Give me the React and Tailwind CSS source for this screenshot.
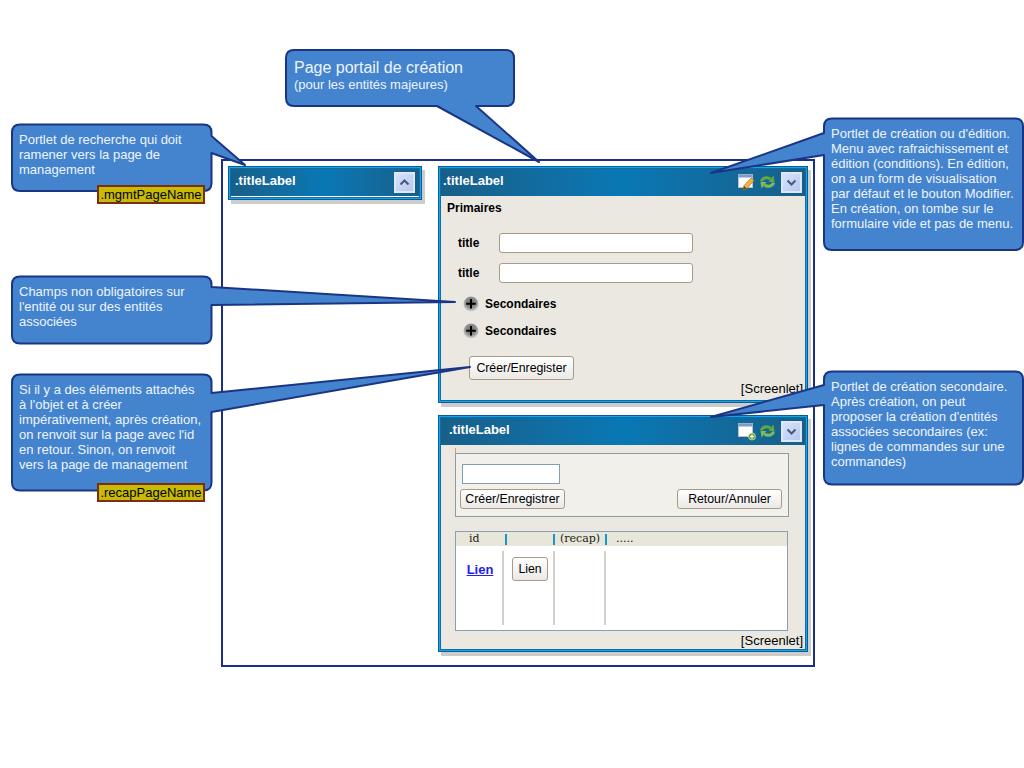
import React from 'react';

const calloutPath = ({ x, y, w, h, side, a, tip, b }) => {
  const r = 8;
  const R = x + w;
  const B = y + h;
  const top = `M${x + r} ${y}H${R - r}Q${R} ${y} ${R} ${y + r}`;
  const right = side === 'right' ? `V${a}L${tip[0]} ${tip[1]}L${R} ${b}V${B - r}` : `V${B - r}`;
  const bottom =
    side === 'bottom'
      ? `Q${R} ${B} ${R - r} ${B}H${b}L${tip[0]} ${tip[1]}L${a} ${B}H${x + r}`
      : `Q${R} ${B} ${R - r} ${B}H${x + r}`;
  const left = side === 'left' ? `V${b}L${tip[0]} ${tip[1]}L${x} ${a}V${y + r}` : `V${y + r}`;
  return `${top}${right}${bottom}Q${x} ${B} ${x} ${B - r}${left}Q${x} ${y} ${x + r} ${y}Z`;
};

const callouts = [
  { x: 286, y: 50, w: 228, h: 56, side: 'bottom', a: 437, tip: [539, 162], b: 476 },
  { x: 12, y: 124.5, w: 199.5, h: 66.5, side: 'right', a: 136, tip: [245, 165], b: 153 },
  { x: 824, y: 118.5, w: 199, h: 131.5, side: 'left', a: 133, tip: [711, 173], b: 155 },
  { x: 12, y: 276.5, w: 199.5, h: 67, side: 'right', a: 287, tip: [455, 302], b: 305 },
  { x: 12, y: 374.5, w: 199.5, h: 116, side: 'right', a: 393, tip: [470, 367], b: 412 },
  { x: 824, y: 371.5, w: 199, h: 113, side: 'left', a: 385, tip: [711, 417], b: 405 },
];

const Note = ({ className, lines }) => (
  <div className={`absolute text-[13px] leading-[15px] text-[#eef4ff] whitespace-nowrap ${className}`}>
    {lines.map((line) => (
      <div key={line}>{line}</div>
    ))}
  </div>
);

const Tag = ({ className, children }) => (
  <div className={`absolute flex items-center justify-center w-[108px] h-[19px] bg-[#c9bb05] border-2 border-[#7b2f10] text-[13px] text-black ${className}`}>
    {children}
  </div>
);

const ArrowButton = ({ up }) => (
  <div className="w-[21px] h-[21px] border-2 border-[#dfe7f5] bg-gradient-to-br from-[#d7e2fb] to-[#b6c8f0] flex items-center justify-center">
    <svg width="11" height="7" viewBox="0 0 11 7">
      <path d={up ? 'M1.5 5.5 5.5 1.5 9.5 5.5' : 'M1.5 1.5 5.5 5.5 9.5 1.5'} fill="none" stroke="#465a78" strokeWidth="2" />
    </svg>
  </div>
);

const WindowIcon = ({ children }) => (
  <svg width="16" height="18" viewBox="0 0 16 18" className="overflow-visible">
    <rect x="0.5" y="1.5" width="14" height="13" fill="#ffffff" stroke="#b4c4d6" />
    <rect x="0.5" y="1.5" width="14" height="3" fill="#7d9ccc" />
    {children}
  </svg>
);

const EditIcon = () => (
  <WindowIcon>
    <path d="M6 12.5 13 5 16 7.5 9 15.5 5 17Z" fill="#f2b23e" stroke="#b87a20" strokeWidth="0.7" />
    <path d="M5 17 6 13 9 15.5Z" fill="#6b4a20" />
  </WindowIcon>
);

const AddIcon = () => (
  <WindowIcon>
    <circle cx="14" cy="14.5" r="3.6" fill="#6ea83c" stroke="#dff0c8" strokeWidth="0.6" />
    <path d="M14 12.5V16.5M12 14.5H16" stroke="#ffffff" strokeWidth="1.2" />
  </WindowIcon>
);

const RefreshIcon = () => (
  <svg width="17" height="16" viewBox="0 0 17 16">
    <path d="M2.5 7.5C3.2 3.8 8 2.6 11.6 5" fill="none" stroke="#63a845" strokeWidth="3" />
    <path d="M9.5 8H15.5L14.5 1.5Z" fill="#63a845" />
    <path d="M14.5 8.5C13.8 12.2 9 13.4 5.4 11" fill="none" stroke="#7dbb5a" strokeWidth="3" />
    <path d="M7.5 8H1.5L2.5 14.5Z" fill="#7dbb5a" />
  </svg>
);

const PlusBall = () => (
  <svg width="16" height="16" viewBox="0 0 16 16">
    <defs>
      <radialGradient id="ball" cx="50%" cy="40%" r="60%">
        <stop offset="0%" stopColor="#6a6a6a" />
        <stop offset="60%" stopColor="#909090" />
        <stop offset="100%" stopColor="#d8d8d8" />
      </radialGradient>
    </defs>
    <circle cx="8" cy="8" r="7.5" fill="url(#ball)" />
    <path d="M8 3V12.5M3.2 7.8H12.8" stroke="#000000" strokeWidth="2" />
  </svg>
);

const Button = ({ className, children }) => (
  <div className={`flex items-center justify-center rounded-[3px] border border-[#a89a88] bg-gradient-to-b from-white to-[#ebe9e6] text-[12.3px] text-black ${className}`}>
    {children}
  </div>
);

const Portlet = ({ className, titleClass, icons, children }) => (
  <div className={`absolute border border-[#0b5c95] shadow-[3px_4px_0_#cccccc] ${className}`}>
    <div className="h-full border border-[#14a6ec]">
      <div className="flex flex-col h-full border border-[#0b6ea8]">
        <div className="flex items-center h-[27px] shrink-0 bg-gradient-to-r from-[#175f88] via-[#0878b5] to-[#175f88]">
          <div className={`grow pb-[4px] text-[13px] font-bold text-white ${titleClass}`}>.titleLabel</div>
          {icons}
        </div>
        {children}
      </div>
    </div>
  </div>
);

const PortletIcons = ({ icon }) => (
  <div className="flex items-center gap-[5px] pr-[3px]">
    <div className="flex items-center gap-[5px] mb-[2px]">
      {icon}
      <RefreshIcon />
    </div>
    <ArrowButton />
  </div>
);

const Field = () => (
  <div className="flex items-center h-[20px]">
    <div className="w-[41px] text-[12px] font-bold text-black">title</div>
    <div className="w-[194px] h-[20px] bg-white border border-[#a89a88] rounded-[3px]" />
  </div>
);

const Secondary = () => (
  <div className="flex items-center gap-[6px] h-[17px] pl-[16px]">
    <PlusBall />
    <div className="text-[12px] font-bold text-black">Secondaires</div>
  </div>
);

const Divider = () => <div className="w-[2px] bg-[#d3d0c9] my-[5px]" />;

const HeadTick = () => <div className="w-[2px] h-[11px] bg-[#1598c8]" />;

export default function App() {
  return (
    <div className="relative w-[1024px] h-[768px] bg-white overflow-hidden font-['Liberation_Sans',sans-serif]">
      <div className="absolute left-[221px] top-[159px] w-[594px] h-[508px] border-2 border-[#1b2f85]" />

      <Portlet
        className="left-[228px] top-[166px] w-[194px] h-[34px]"
        titleClass="pl-[4px]"
        icons={<div className="pr-[4px]"><ArrowButton up /></div>}
      >
        <div className="h-[1px] mx-[1px] bg-white" />
      </Portlet>

      <Portlet
        className="left-[438px] top-[166px] w-[370px] h-[237px]"
        titleClass="pl-[2px]"
        icons={<PortletIcons icon={<EditIcon />} />}
      >
        <div className="flex flex-col grow bg-[#ebe8e2] px-[6px] pt-[5px]">
          <div className="text-[12px] font-bold text-black leading-[15px]">Primaires</div>
          <div className="flex flex-col gap-[10px] pl-[11px] pt-[17px]">
            <Field />
            <Field />
          </div>
          <div className="flex flex-col gap-[10px] pt-[12px]">
            <Secondary />
            <Secondary />
          </div>
          <div className="pl-[22px] pt-[17px]">
            <Button className="w-[105px] h-[24px]">Créer/Enregister</Button>
          </div>
          <div className="text-right text-[13px] leading-[15px] text-black mr-[-4px] mt-[1px]">[Screenlet]</div>
        </div>
      </Portlet>

      <Portlet
        className="left-[438px] top-[415px] w-[370px] h-[237px]"
        titleClass="pl-[8px]"
        icons={<PortletIcons icon={<AddIcon />} />}
      >
        <div className="flex flex-col grow bg-[#ebe8e2] px-[14px] pt-[8px]">
          <div className="relative w-[334px] h-[64px] bg-[#f2f0eb] border border-[#8f9aa3] pl-[4px] pr-[6px] pt-[10px]">
            <div className="absolute left-[-1px] top-[-6px] w-[1px] h-[5px] bg-[#e0a050]" />
            <div className="w-[98px] h-[20px] ml-[2px] bg-white border border-[#7f9db9]" />
            <div className="flex justify-between mt-[5px]">
              <Button className="w-[105px] h-[20px]">Créer/Enregistrer</Button>
              <Button className="w-[105px] h-[20px]">Retour/Annuler</Button>
            </div>
          </div>
          <div className="flex flex-col h-[100px] w-[333px] mt-[14px] bg-white border border-[#85a0b8]">
            <div className="flex items-center h-[14px] bg-[#e8e6d8] font-['DejaVu_Serif',serif] text-[11px] text-[#222222]">
              <div className="w-[49px] pl-[13px]">id</div>
              <HeadTick />
              <div className="w-[46px]" />
              <HeadTick />
              <div className="w-[50px] pl-[5px]">(recap)</div>
              <HeadTick />
              <div className="pl-[9px]">.....</div>
            </div>
            <div className="flex grow">
              <div className="w-[46px] pl-[2px] pt-[14px] text-center text-[13px] font-bold text-[#2222ee] underline">Lien</div>
              <Divider />
              <div className="w-[49px] pl-[8px] pt-[11px]">
                <Button className="w-[36px] h-[24px]">Lien</Button>
              </div>
              <Divider />
              <div className="w-[49px]" />
              <Divider />
            </div>
          </div>
          <div className="text-right text-[13px] leading-[15px] text-black mr-[-12px] mt-[2px]">[Screenlet]</div>
        </div>
      </Portlet>

      <svg className="absolute left-0 top-0" width="1024" height="768" viewBox="0 0 1024 768">
        {callouts.map((c) => (
          <path key={c.x + '-' + c.y} d={calloutPath(c)} fill="#4484ce" stroke="#1b3585" strokeWidth="2" strokeLinejoin="round" />
        ))}
      </svg>

      <div className="absolute left-[294px] top-[58px] text-[#eef4ff] whitespace-nowrap">
        <div className="text-[16px] leading-[19px]">Page portail de création</div>
        <div className="text-[13px] leading-[15px]">(pour les entités majeures)</div>
      </div>
      <Note className="left-[19px] top-[132px]" lines={['Portlet de recherche qui doit', 'ramener vers la page de', 'management']} />
      <Note
        className="left-[831px] top-[126px]"
        lines={[
          'Portlet de création ou d\'édition.',
          'Menu avec rafraichissement et',
          'édition (conditions). En édition,',
          'on a un form de visualisation',
          'par défaut et le bouton Modifier.',
          'En création, on tombe sur le',
          'formulaire vide et pas de menu.',
        ]}
      />
      <Note className="left-[19px] top-[284px]" lines={['Champs non obligatoires sur', 'l\'entité ou sur des entités', 'associées']} />
      <Note
        className="left-[19px] top-[382px]"
        lines={[
          'Si il y a des éléments attachés',
          'à l\'objet et à créer',
          'impérativement, après création,',
          'on renvoit sur la page avec l\'id',
          'en retour. Sinon, on renvoit',
          'vers la page de management',
        ]}
      />
      <Note
        className="left-[831px] top-[379px]"
        lines={[
          'Portlet de création secondaire.',
          'Après création, on peut',
          'proposer la création d\'entités',
          'associées secondaires (ex:',
          'lignes de commandes sur une',
          'commandes)',
        ]}
      />
      <Tag className="left-[97px] top-[185px]">.mgmtPageName</Tag>
      <Tag className="left-[97px] top-[483px]">.recapPageName</Tag>
    </div>
  );
}
